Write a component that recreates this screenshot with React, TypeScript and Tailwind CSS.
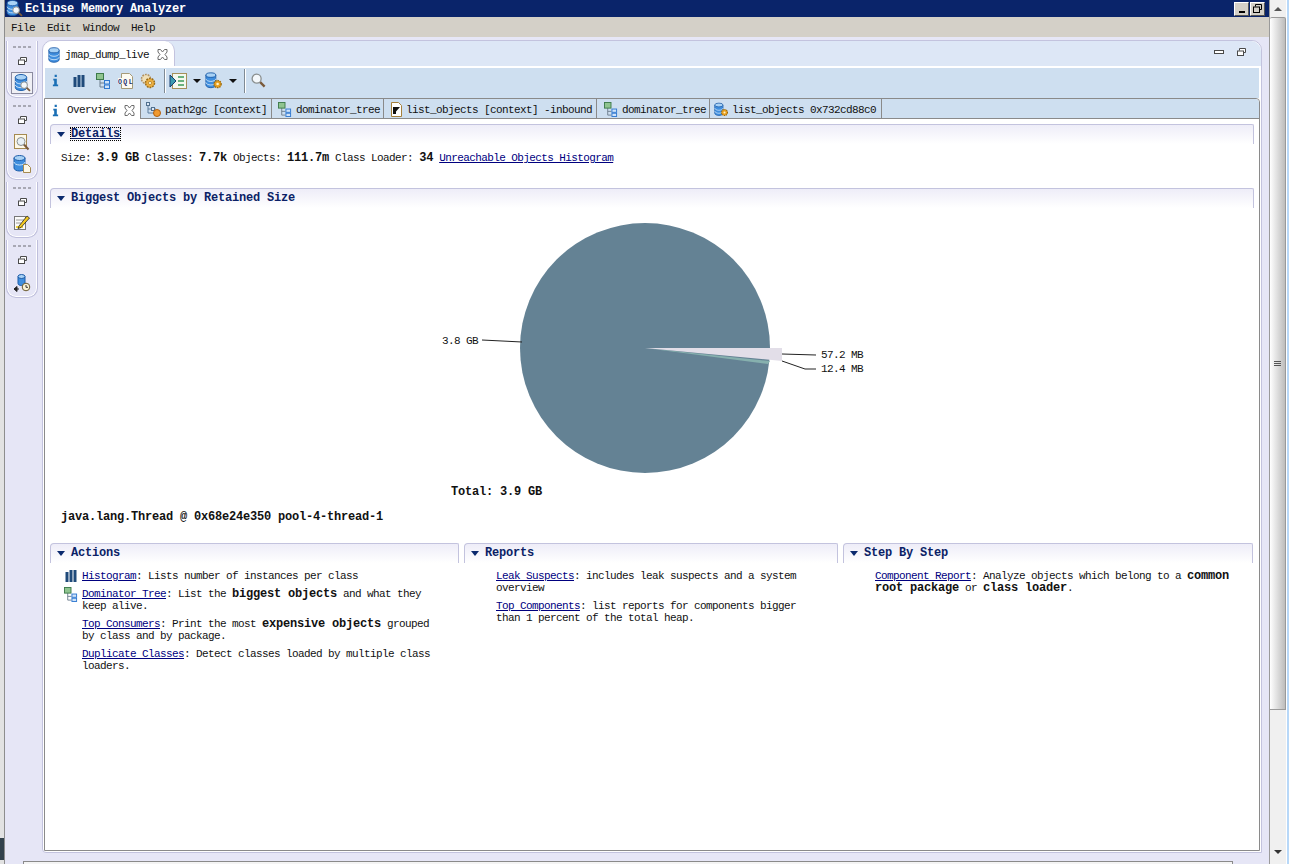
import type { ReactNode } from 'react';

function Db({ className = '' }: { className?: string }) {
  return (
    <svg viewBox="0 0 14 18" className={className}>
      <path d="M1 3.5v11c0 1.6 2.7 3 6 3s6-1.4 6-3v-11z" fill="#3f8ede" stroke="#1c5ca8" />
      <ellipse cx="7" cy="3.5" rx="6" ry="3" fill="#a9d2f5" stroke="#1c5ca8" />
      <path d="M1 7.5c0 1.6 2.7 3 6 3s6-1.4 6-3M1 11.5c0 1.6 2.7 3 6 3s6-1.4 6-3" fill="none" stroke="#cfe6fa" />
    </svg>
  );
}

function Gear({ x = 0, y = 0, r = 4 }: { x?: number; y?: number; r?: number }) {
  return (
    <g>
      <circle cx={x} cy={y} r={r} fill="#e8a020" stroke="#96680f" strokeWidth="1.4" strokeDasharray="1.6 1" />
      <circle cx={x} cy={y} r={r * 0.35} fill="#fff3c8" />
    </g>
  );
}

function DbGear({ className = '' }: { className?: string }) {
  return (
    <svg viewBox="0 0 20 18" className={className}>
      <path d="M1 3v11c0 1.6 2.5 3 5.5 3s5.5-1.4 5.5-3V3z" fill="#3f8ede" stroke="#1c5ca8" />
      <ellipse cx="6.5" cy="3" rx="5.5" ry="2.5" fill="#a9d2f5" stroke="#1c5ca8" />
      <path d="M1 7c0 1.6 2.5 3 5.5 3s5.5-1.4 5.5-3M1 11c0 1.6 2.5 3 5.5 3s5.5-1.4 5.5-3" fill="none" stroke="#cfe6fa" />
      <Gear x={14} y={13} r={4} />
    </svg>
  );
}

function TreeIcon({ className = '' }: { className?: string }) {
  return (
    <svg viewBox="0 0 15 16" className={className}>
      <path d="M4 6v8h4M4 10h4" fill="none" stroke="#6f7f8f" />
      <rect x="0.5" y="0.5" width="7" height="6" fill="#8fc48f" stroke="#3c7a4a" />
      <rect x="8.5" y="7.5" width="5" height="3.5" fill="#cfe3fa" stroke="#2f78d0" />
      <rect x="8.5" y="12" width="5" height="3.5" fill="#cfe3fa" stroke="#2f78d0" />
    </svg>
  );
}

function PathIcon({ className = '' }: { className?: string }) {
  return (
    <svg viewBox="0 0 15 15" className={className}>
      <path d="M2 3v8h6M2 7h8" fill="none" stroke="#5f7f9f" />
      <rect x="0.5" y="0.5" width="3" height="3" fill="#dce8f6" stroke="#50708f" />
      <rect x="5.5" y="5.5" width="3" height="3" fill="#dce8f6" stroke="#50708f" />
      <circle cx="11" cy="11" r="3.5" fill="#f09a30" stroke="#b06010" />
    </svg>
  );
}

function Bars({ className = '' }: { className?: string }) {
  return (
    <svg viewBox="-0.5 0 12 12" className={className}>
      <path d="M0 2h3v10H0zM4 0h3v12H4zM8 0h3v12H8z" fill="#1f4a7a" />
    </svg>
  );
}

function InfoI({ className = '' }: { className?: string }) {
  return (
    <svg viewBox="0 0 8 13" className={className}>
      <path d="M3 0h2.5v2.5H3zM1.5 4.5h4V11H7v2H1v-2h1.5V6.5h-1z" fill="#1a6fb5" />
    </svg>
  );
}

function Lens({ className = '' }: { className?: string }) {
  return (
    <svg viewBox="0 0 16 16" className={className}>
      <path d="M9.5 9.5l5 5" stroke="#7a5a3a" strokeWidth="2.5" />
      <circle cx="6" cy="6" r="4.8" fill="#f4f8fb" stroke="#8a8f8f" strokeWidth="1.4" />
    </svg>
  );
}

function PageLens({ className = '' }: { className?: string }) {
  return (
    <svg viewBox="0 0 16 17" className={className}>
      <rect x="0.5" y="0.5" width="12" height="14" fill="#fdf8e8" stroke="#a58a50" />
      <path d="M9.5 10l5 5.5" stroke="#7a5a3a" strokeWidth="2" />
      <circle cx="7" cy="7.5" r="4" fill="#e8f0f6" stroke="#8a8f8f" />
    </svg>
  );
}

function DbPage({ className = '' }: { className?: string }) {
  return (
    <svg viewBox="0 0 18 18" className={className}>
      <path d="M1 3v10c0 1.6 2.5 3 5.5 3s5.5-1.4 5.5-3V3z" fill="#3f8ede" stroke="#1c5ca8" />
      <ellipse cx="6.5" cy="3" rx="5.5" ry="2.5" fill="#a9d2f5" stroke="#1c5ca8" />
      <path d="M1 7c0 1.6 2.5 3 5.5 3s5.5-1.4 5.5-3" fill="none" stroke="#cfe6fa" />
      <path d="M10.5 9.5h4l3 3v5h-7z" fill="#fdf8e8" stroke="#a58a50" />
    </svg>
  );
}

function EditIcon({ className = '' }: { className?: string }) {
  return (
    <svg viewBox="0 0 16 16" className={className}>
      <rect x="0.5" y="2.5" width="11" height="13" fill="#fbfbfb" stroke="#777" />
      <path d="M2 6h8M2 9h5" stroke="#999" />
      <path d="M2 12h7v2H2z" fill="#f2d440" />
      <path d="M5 12l8-10 2.5 2-8.5 9.5-3 1z" fill="#f4c820" stroke="#222" strokeWidth="0.8" />
    </svg>
  );
}

function DbClock({ className = '' }: { className?: string }) {
  return (
    <svg viewBox="0 0 17 18" className={className}>
      <path d="M4 2.5v7c0 1.2 1.5 2 3.5 2s3.5-.8 3.5-2v-7z" fill="#3f8ede" stroke="#1c5ca8" />
      <ellipse cx="7.5" cy="2.5" rx="3.5" ry="2" fill="#a9d2f5" stroke="#1c5ca8" />
      <path d="M0 15h5M0 15l3-2.5v5z" stroke="#222" fill="#222" />
      <circle cx="12" cy="13" r="3.8" fill="#fbf4d8" stroke="#6a5a30" />
      <path d="M12 11v2.3h2" fill="none" stroke="#333" />
    </svg>
  );
}

function ListArrow({ className = '' }: { className?: string }) {
  return (
    <svg viewBox="0 0 18 16" className={className}>
      <rect x="3.5" y="0.5" width="14" height="15" fill="#f4f8ee" stroke="#a5905a" />
      <path d="M9 4h6M9 8h6M9 12h6" stroke="#3c9a5a" strokeWidth="1.5" />
      <path d="M1 2l6 6-6 6z" fill="#3d9bb0" stroke="#143c70" />
    </svg>
  );
}

function OqlIcon({ className = '' }: { className?: string }) {
  return (
    <svg viewBox="0 0 16 16" className={className}>
      <path d="M3.5 0.5h8l3 3v12h-11z" fill="#fdfbf2" stroke="#a59a78" />
      <rect x="0" y="5" width="14" height="6" fill="#fdfbf2" />
      <text x="0" y="10.8" fontSize="6.5" fontWeight="700" fontFamily="Liberation Mono, monospace" fill="#1c2c6c" textLength="14">OQL</text>
    </svg>
  );
}

function GearIcon({ className = '' }: { className?: string }) {
  return (
    <svg viewBox="0 0 16 16" className={className}>
      <circle cx="6" cy="6" r="4.5" fill="#f0e0b8" stroke="#b09060" strokeWidth="1.5" strokeDasharray="1.8 1" />
      <circle cx="10" cy="10" r="4.5" fill="#eeb040" stroke="#9a6c18" strokeWidth="1.5" strokeDasharray="1.8 1" />
      <circle cx="10" cy="10" r="1.6" fill="#fff4cc" stroke="#9a6c18" strokeWidth="0.6" />
    </svg>
  );
}

function MatDoc({ className = '' }: { className?: string }) {
  return (
    <svg viewBox="0 0 11 15" className={className}>
      <path d="M0.5 0.5h7l3 3v11h-10z" fill="#fff" stroke="#a5803c" />
      <path d="M2 5h7L5 9.5V12H2z" fill="#111" />
    </svg>
  );
}

function CloseX() {
  return (
    <svg viewBox="0 0 11 11" className="w-[11px] h-[11px]">
      <path d="M1 .5h2.5L5.5 3l2-2.5H10V3L8 5.5l2 2.5v2.500H7.5l-2-2.500-2 2.500H1V8l2-2.500L1 3z" fill="#fff" stroke="#6d6d6d" />
    </svg>
  );
}

function Restore({ className = '' }: { className?: string }) {
  return (
    <svg viewBox="0 0 9 8" className={className}>
      <path d="M2.5 2.5V.5h6v4h-2" fill="#fff" stroke="#4a4a4a" />
      <rect x="0.5" y="3" width="6" height="4.5" fill="#fff" stroke="#4a4a4a" />
    </svg>
  );
}

function Caret() {
  return <div className="w-0 h-0 border-x-[4px] border-x-transparent border-t-[4px] border-t-[#111]" />;
}

function Sep() {
  return <div className="w-[1px] h-[24px] bg-[#7f8a94] border-r border-white box-content" />;
}

function TrimGroup({ h, children }: { h: string; children: ReactNode }) {
  return (
    <div className={`${h} w-[32px] ml-[1px] flex flex-col items-center bg-[#e6e6f6] border border-t-0 border-[#bfbfdc] rounded-b-[10px] shadow-[inset_0_-1px_0_#fff,inset_1px_0_0_#fff,inset_-1px_0_0_#fff]`}>
      <div className="mt-[5px] flex gap-[2px]">
        <i className="block w-[3px] h-[2px] bg-[#a8a8b4]" />
        <i className="block w-[3px] h-[2px] bg-[#a8a8b4]" />
        <i className="block w-[3px] h-[2px] bg-[#a8a8b4]" />
        <i className="block w-[3px] h-[2px] bg-[#a8a8b4]" />
      </div>
      <Restore className="w-[9px] h-[8px] mt-[9px]" />
      {children}
    </div>
  );
}

function Section({ title, focus, className = '', children }: { title: string; focus?: boolean; className?: string; children?: ReactNode }) {
  return (
    <div className={className}>
      <div className="h-[20px] flex items-center pb-[1px] pl-[6px] gap-[6px] border-t border-x border-[#c3c3de] border-b-0 rounded-tl-[4px] rounded-tr-[2px] bg-gradient-to-b from-[#eeedf8] to-white">
        <div className="w-0 h-0 border-x-[4px] border-x-transparent border-t-[5px] border-t-[#0b2a6e]" />
        <span className={`text-[12px] tracking-[-0.2px] font-bold text-[#0b1f66] ${focus ? 'underline outline-1 outline-dotted outline-black' : ''}`}>{title}</span>
      </div>
      {children}
    </div>
  );
}

function B({ children }: { children: ReactNode }) {
  return <b className="text-[12px] tracking-[-0.2px] font-bold">{children}</b>;
}

function A({ children }: { children: ReactNode }) {
  return <span className="text-[#00007f] underline">{children}</span>;
}

const innerTabs = [
  { label: 'path2gc [context]', w: 'w-[131px]', pl: 'pl-[5px]', gap: 'gap-[4px]', icon: <PathIcon className="w-[15px] h-[15px]" /> },
  { label: 'dominator_tree', w: 'w-[112px]', pl: 'pl-[6px]', gap: 'gap-[4px]', icon: <TreeIcon className="w-[14px] h-[15px]" /> },
  { label: 'list_objects [context] -inbound', w: 'w-[213px]', pl: 'pl-[7px]', gap: 'gap-[4px]', icon: <MatDoc className="w-[11px] h-[15px]" /> },
  { label: 'dominator_tree', w: 'w-[113px]', pl: 'pl-[7px]', gap: 'gap-[4px]', icon: <TreeIcon className="w-[14px] h-[15px]" /> },
  { label: 'list_objects 0x732cd88c0', w: 'w-[172px]', pl: 'pl-[4px]', gap: 'gap-[3px]', icon: <DbGear className="w-[15px] h-[15px]" /> },
];

export default function App() {
  return (
    <div className="w-[1289px] h-[864px] overflow-hidden flex bg-[#e6e6f6] text-[11px] leading-[12px] tracking-[-0.6px] text-[#111] font-['Liberation_Mono','Noto_Sans_CJK_SC',monospace]">
      {/* desktop sliver on the left */}
      <div className="w-[5px] shrink-0 flex flex-col bg-[#e2e2e2] border-r border-[#8d8d8d]">
        <div className="h-[838px]" />
        <div className="h-[22px] bg-[#33424c]" />
      </div>

      <div className="w-[1264px] shrink-0 flex flex-col">
        <div className="h-[17px] shrink-0 flex items-center bg-[#0a246a] text-white relative">
          <div className="relative w-[17px] h-[17px] ml-[1px]">
            <Db className="w-[13px] h-[16px]" />
            <Lens className="absolute right-0 bottom-0 w-[11px] h-[11px]" />
          </div>
          <span className="ml-[2px] text-[12px] tracking-[-0.2px] font-bold">Eclipse Memory Analyzer</span>
          <div className="ml-auto mr-[4px] flex gap-[1px]">
            <div className="w-[15px] h-[14px] bg-[#d4d0c8] flex items-end justify-center pb-[2px] border border-t-white border-l-white border-r-[#555] border-b-[#555]">
              <i className="block w-[6px] h-[2px] bg-black" />
            </div>
            <div className="w-[15px] h-[14px] bg-[#d4d0c8] flex items-center justify-center border border-t-white border-l-white border-r-[#555] border-b-[#555]">
              <svg viewBox="0 0 9 9" className="w-[9px] h-[9px]">
                <path d="M2.5 2.5V.5h6v5h-2" fill="none" stroke="#000" />
                <rect x="0.5" y="3" width="6" height="5.5" fill="none" stroke="#000" />
              </svg>
            </div>
          </div>
        </div>

        <div className="h-[20px] shrink-0 flex items-center bg-[#d4d0c8] pl-[6px] pt-[1px] gap-[12px] text-[#111]">
          <span>File</span>
          <span>Edit</span>
          <span>Window</span>
          <span>Help</span>
        </div>

        <div className="flex-1 flex min-h-0">
          {/* trim stacks */}
          <div className="w-[37px] shrink-0 pt-[4px] flex flex-col gap-[2px]">
            <TrimGroup h="h-[57px]">
              <div className="mt-[7px] w-[22px] h-[22px] border border-[#8b8b9f] bg-[#f0f0f5] flex items-center justify-center">
                <div className="relative w-[17px] h-[18px]">
                  <Db className="w-[14px] h-[17px]" />
                  <Lens className="absolute right-0 bottom-0 w-[11px] h-[11px]" />
                </div>
              </div>
            </TrimGroup>
            <TrimGroup h="h-[80px]">
              <PageLens className="w-[16px] h-[17px] mt-[10px]" />
              <DbPage className="w-[18px] h-[18px] mt-[4px]" />
            </TrimGroup>
            <TrimGroup h="h-[56px]">
              <EditIcon className="w-[16px] h-[16px] mt-[8px]" />
            </TrimGroup>
            <TrimGroup h="h-[58px]">
              <DbClock className="w-[17px] h-[18px] mt-[10px]" />
            </TrimGroup>
          </div>

          {/* editor area */}
          <div className="w-[1220px] shrink-0 mt-[3px] mb-[8px] flex flex-col bg-white border border-[#c3c3de] rounded-t-[10px] rounded-bl-[4px]">
            <div className="h-[25px] shrink-0 flex bg-[#dde7f6] rounded-t-[10px]">
              <div className="w-[132px] flex items-center pl-[5px] pt-[2px] bg-white rounded-t-[10px] border-r border-[#c3c3de]">
                <Db className="w-[12px] h-[16px]" />
                <span className="ml-[5px]">jmap_dump_live</span>
                <span className="ml-[8px] flex"><CloseX /></span>
              </div>
              <div className="ml-auto mr-[15px] pb-[4px] flex items-center gap-[13px]">
                <i className="block w-[10px] h-[4px] bg-white border border-[#4a4a4a]" />
                <Restore className="w-[9px] h-[8px]" />
              </div>
            </div>

            <div className="h-[2px] shrink-0" />

            <div className="h-[30px] shrink-0 mx-[2px] pb-[5px] flex items-center bg-[#cedff0] text-[#111]">
              <InfoI className="w-[7px] h-[13px] ml-[7px]" />
              <Bars className="w-[12px] h-[12px] ml-[14px]" />
              <TreeIcon className="w-[15px] h-[16px] ml-[11px]" />
              <OqlIcon className="w-[16px] h-[16px] ml-[7px]" />
              <GearIcon className="w-[16px] h-[16px] ml-[6px]" />
              <div className="ml-[8px]"><Sep /></div>
              <ListArrow className="w-[18px] h-[16px] ml-[3px]" />
              <div className="ml-[6px]"><Caret /></div>
              <DbGear className="w-[18px] h-[17px] ml-[4px]" />
              <div className="ml-[6px]"><Caret /></div>
              <div className="ml-[7px]"><Sep /></div>
              <Lens className="w-[15px] h-[15px] ml-[5px]" />
            </div>

            <div className="flex-1 mx-[1px] mb-[1px] flex flex-col border border-[#8a8a8a] min-h-0 rounded-tr-[4px]">
              <div className="h-[20px] shrink-0 flex bg-[#cedff0] border-b border-[#8a8a8a] rounded-tr-[4px]">
                <div className="w-[96px] h-[20px] flex items-center pl-[7px] pt-[2px] bg-white border-r border-[#8a8a8a]">
                  <InfoI className="w-[7px] h-[13px]" />
                  <span className="ml-[8px]">Overview</span>
                  <span className="ml-[9px] flex"><CloseX /></span>
                </div>
                {innerTabs.map((tab, index) => (
                  <div key={index} className={`${tab.w} ${tab.pl} ${tab.gap} h-[19px] pt-[2px] flex items-center border-r border-[#8a8a8a] whitespace-nowrap`}>
                    {tab.icon}
                    <span>{tab.label}</span>
                  </div>
                ))}
              </div>

              <div className="flex-1 pt-[5px] px-[5px] bg-white">
                <Section title="Details" focus className="h-[64px]">
                  <div className="mt-[8px] pl-[11px] whitespace-pre">
                    Size: <B>3.9 GB</B> Classes: <B>7.7k</B> Objects: <B>111.7m</B> Class Loader: <B>34</B> <A>Unreachable Objects Histogram</A>
                  </div>
                </Section>

                <Section title="Biggest Objects by Retained Size">
                  <svg viewBox="420 215 460 264" className="w-[460px] h-[264px] mt-[7px] ml-[370px]">
                    <circle cx="645" cy="348" r="125" fill="#648294" />
                    <path d="M645 348 L770 361 L768 364 Z" fill="#86b0ae" />
                    <path d="M645 348 L782 348 L782 361 Z" fill="#e2dee8" />
                    <path d="M482 340 L522 342" stroke="#222" fill="none" />
                    <path d="M782 354 L816 355" stroke="#222" fill="none" />
                    <path d="M782 361 L805 369 L816 369" stroke="#222" fill="none" />
                    <text x="442" y="344" fontSize="11" fill="#111">3.8 GB</text>
                    <text x="821" y="358" fontSize="11" fill="#111">57.2 MB</text>
                    <text x="821" y="372" fontSize="11" fill="#111">12.4 MB</text>
                  </svg>
                  <div className="mt-[7px] ml-[401px]"><B>Total: 3.9 GB</B></div>
                  <div className="mt-[13px] ml-[11px]"><B>java.lang.Thread @ 0x68e24e350 pool-4-thread-1</B></div>
                </Section>

                <div className="mt-[20px] flex gap-[5px]">
                  <Section title="Actions" className="w-[409px]">
                    <div className="mt-[7px] flex flex-col gap-[6px]">
                      <div className="flex">
                        <div className="w-[32px] pl-[15px]"><Bars className="w-[12px] h-[12px]" /></div>
                        <p className="w-[358px]"><A>Histogram</A>: Lists number of instances per class</p>
                      </div>
                      <div className="flex">
                        <div className="w-[32px] pl-[14px] -mt-[1px]"><TreeIcon className="w-[14px] h-[15px]" /></div>
                        <p className="w-[358px]"><A>Dominator Tree</A>: List the <B>biggest objects</B> and what they keep alive.</p>
                      </div>
                      <p className="w-[358px] ml-[32px]"><A>Top Consumers</A>: Print the most <B>expensive objects</B> grouped by class and by package.</p>
                      <p className="w-[358px] ml-[32px]"><A>Duplicate Classes</A>: Detect classes loaded by multiple class loaders.</p>
                    </div>
                  </Section>
                  <Section title="Reports" className="w-[374px]">
                    <div className="mt-[7px] pl-[32px] flex flex-col gap-[6px]">
                      <p className="w-[310px]"><A>Leak Suspects</A>: includes leak suspects and a system overview</p>
                      <p className="w-[310px]"><A>Top Components</A>: list reports for components bigger than 1 percent of the total heap.</p>
                    </div>
                  </Section>
                  <Section title="Step By Step" className="w-[410px]">
                    <div className="mt-[7px] pl-[32px]">
                      <p className="w-[360px]"><A>Component Report</A>: Analyze objects which belong to a <B>common root package</B> or <B>class loader</B>.</p>
                    </div>
                  </Section>
                </div>
              </div>
            </div>
          </div>
        </div>

        {/* bottom sliver of the window behind */}
        <div className="h-[3px] shrink-0 ml-[18px] mr-[36px] bg-[#f4f4f4] border-t border-x border-[#8a8a8a]" />
      </div>

      {/* scrollbar */}
      <div className="w-[17px] shrink-0 flex flex-col items-center bg-[#f0f0f0] border-l border-[#9a9a9a]">
        <div className="h-[17px] flex items-center justify-center">
          <div className="w-0 h-0 border-x-[4px] border-x-transparent border-b-[4px] border-b-[#555]" />
        </div>
        <div className="h-[693px] w-full flex items-center justify-center bg-gradient-to-r from-white to-[#bdbdbd] border-r border-t border-b border-[#9a9a9a] rounded-t-[2px]">
          <div className="flex flex-col gap-[1px]">
            <i className="block w-[7px] h-[1px] bg-[#555]" />
            <i className="block w-[7px] h-[1px] bg-[#555]" />
            <i className="block w-[7px] h-[1px] bg-[#555]" />
          </div>
        </div>
        <div className="flex-1 flex items-end pb-[10px]">
          <div className="w-0 h-0 border-x-[4px] border-x-transparent border-t-[4px] border-t-[#333]" />
        </div>
      </div>
      <div className="flex-1 flex bg-white">
        <div className="w-[1px]" />
        <div className="flex-1 bg-[#b8d8f8]" />
      </div>
    </div>
  );
}
